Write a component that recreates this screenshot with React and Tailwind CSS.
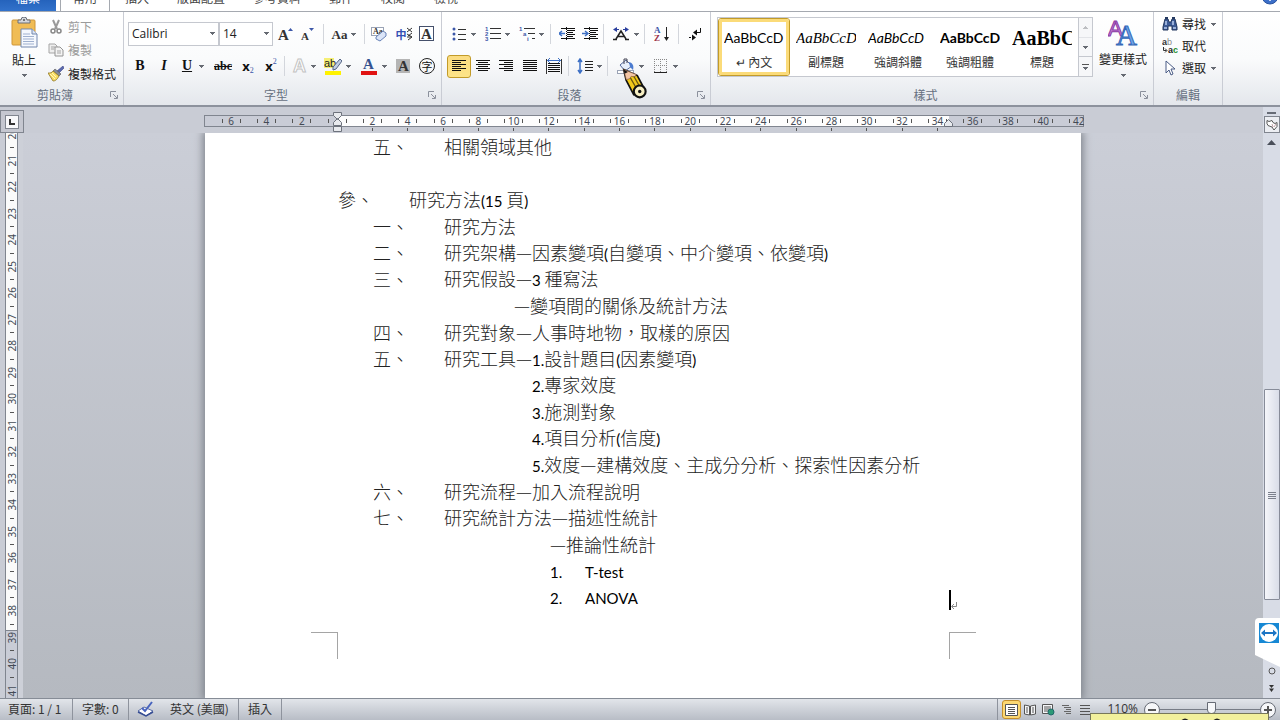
import React, { useState } from 'react';
import clsx from 'clsx';

const tabs = [
  { name: '插入', width: 'w-[54px]' },
  { name: '版面配置', width: 'w-[74px]' },
  { name: '參考資料', width: 'w-[78px]' },
  { name: '郵件', width: 'w-[50px]' },
  { name: '校閱', width: 'w-[54px]' },
  { name: '檢視', width: 'w-[52px]' },
];

const styles = [
  { name: '↵ 內文', sample: 'AaBbCcD', look: 'text-[14px]' },
  { name: '副標題', sample: 'AaBbCcD', look: 'text-[15px] italic font-["Liberation_Serif",serif]' },
  { name: '強調斜體', sample: 'AaBbCcD', look: 'text-[14px] italic' },
  { name: '強調粗體', sample: 'AaBbCcD', look: 'text-[14px] font-bold' },
  { name: '標題', sample: 'AaBbC', look: 'text-[20px] font-bold font-["Liberation_Serif",serif]' },
];

const lines = [
  { indent: 'pl-[35px]', label: '五、', text: '相關領域其他' },
  { indent: '', text: '' },
  { indent: '', label: '參、', text: '研究方法(15 頁)' },
  { indent: 'pl-[35px]', label: '一、', text: '研究方法' },
  { indent: 'pl-[35px]', label: '二、', text: '研究架構—因素變項(自變項、中介變項、依變項)' },
  { indent: 'pl-[35px]', label: '三、', text: '研究假設—3 種寫法' },
  { indent: 'pl-[176px]', text: '—變項間的關係及統計方法' },
  { indent: 'pl-[35px]', label: '四、', text: '研究對象—人事時地物，取樣的原因' },
  { indent: 'pl-[35px]', label: '五、', text: '研究工具—1.設計題目(因素變項)' },
  { indent: 'pl-[194px]', text: '2.專家效度' },
  { indent: 'pl-[194px]', text: '3.施測對象' },
  { indent: 'pl-[194px]', text: '4.項目分析(信度)' },
  { indent: 'pl-[194px]', text: '5.效度—建構效度、主成分分析、探索性因素分析' },
  { indent: 'pl-[35px]', label: '六、', text: '研究流程—加入流程說明' },
  { indent: 'pl-[35px]', label: '七、', text: '研究統計方法—描述性統計' },
  { indent: 'pl-[212px]', text: '—推論性統計' },
  { indent: 'pl-[212px]', label: '1.', narrow: true, text: 'T-test' },
  { indent: 'pl-[212px]', label: '2.', narrow: true, text: 'ANOVA', caret: true },
];

const rulerMarks = Array.from({ length: 25 }, (_, i) => i * 2 - 6);
const sideMarks = Array.from({ length: 22 }, (_, i) => i + 20);

const Arrow = ({ className = '' }) => (
  <svg width="5" height="3" viewBox="0 0 5 3" className={clsx('shrink-0', className)} shapeRendering="crispEdges">
    <path d="M0 0h5v1H4v1H3v1H2V2H1V1H0z" fill="#666a72" />
  </svg>
);

const Separator = ({ className = '' }) => (
  <div className={clsx('w-px h-5 bg-[#d3d6dc] shrink-0', className)} />
);

const Tool = ({ label, width = 'w-6', active, arrow, children }) => (
  <button
    type="button"
    aria-label={label}
    className={clsx(
      'h-[23px] shrink-0 flex items-center justify-center gap-1',
      width,
      active && 'rounded-[3px] border border-[#c29b29] bg-gradient-to-b from-[#fbdc81] to-[#fde488]'
    )}
  >
    {children}
    {arrow && <Arrow />}
  </button>
);

const Glyph = ({ children, w = 16, h = 16 }) => (
  <svg width={w} height={h} viewBox={`0 0 ${w} ${h}`} className="shrink-0">
    {children}
  </svg>
);

// 段落對齊用的橫線
const Bars = ({ rows }) => (
  <svg width="16" height="14" viewBox="0 0 16 14" shapeRendering="crispEdges" fill="#111">
    {rows.map(([x, w], i) => (
      <rect key={i} x={x} y={1 + i * 2} width={w} height="1" />
    ))}
  </svg>
);

const alignLeft = [[1, 14], [1, 9], [1, 14], [1, 9], [1, 14], [1, 9]];
const alignCenter = [[1, 14], [3, 10], [1, 14], [3, 10], [1, 14], [3, 10]];
const alignRight = [[1, 14], [6, 9], [1, 14], [6, 9], [1, 14], [6, 9]];
const alignFull = [[1, 14], [1, 14], [1, 14], [1, 14], [1, 14], [1, 14]];

const Group = ({ title, width, launcher, children }) => (
  <section className={clsx('h-full shrink-0 flex flex-col border-r border-[#c9ccd4]', width)}>
    <div className="flex-1 min-h-0">{children}</div>
    <div className="h-5 flex items-center text-[#66707f]">
      <h2 className="flex-1 text-center leading-none">{title}</h2>
      {launcher && (
        <button type="button" aria-label={title + '選項'} className="block w-[13px]">
          <svg width="8" height="8" viewBox="0 0 8 8" fill="none" stroke="#8b909c">
            <path d="M0.500 6V0.500H6M3 3l4 4M7.500 4v3.500H4" />
          </svg>
        </button>
      )}
    </div>
  </section>
);

const Combo = ({ label, value, width }) => (
  <div className={clsx('relative h-6 shrink-0', width)}>
    <select
      aria-label={label}
      defaultValue={value}
      className="appearance-none w-full h-full bg-white border border-[#c5c8cf] pl-[3px] text-[12px] leading-none text-[#222] font-['Open_Sans',sans-serif]"
    >
      <option>{value}</option>
    </select>
    <Arrow className="absolute right-[4px] top-[10px]" />
  </div>
);

const ClipboardGroup = () => (
  <Group title="剪貼簿" width="w-[124px]" launcher>
    <div className="flex">
      <button type="button" className="w-12 pt-[5px] flex flex-col items-center text-[#222]">
        <Glyph w={28} h={31}>
          <rect x="2" y="3" width="23" height="25" rx="1" fill="#f0bc55" stroke="#cf9638" />
          <path d="M8 6V3h3a3 3 0 0 1 6 0h3v3z" fill="#d4d7dc" stroke="#6a6f78" />
          <circle cx="14" cy="3" r="1" fill="#555" />
          <path d="M11 12h11l5 5v13H11z" fill="#f5f8fd" stroke="#7287ad" />
          <path d="M22 12v5h5" fill="#dde6f4" stroke="#7287ad" />
          <path d="M13 17h7M13 19.500h11M13 22h11M13 24.500h11M13 27h11" stroke="#9fb0cf" />
        </Glyph>
        <span className="leading-4 mt-[4px]">貼上</span>
        <Arrow className="mt-[6px]" />
      </button>
      <div className="flex flex-col pt-[3px]">
        <button type="button" className="h-[23px] flex items-center gap-1 text-[#9b9b9b]">
          <Glyph>
            <path d="M5 1l4 9M11 1L7 10" stroke="#9a9a9a" strokeWidth="2" />
            <circle cx="5" cy="12" r="2" fill="none" stroke="#888" strokeWidth="1.500" />
            <circle cx="11" cy="12" r="2" fill="none" stroke="#888" strokeWidth="1.500" />
          </Glyph>
          剪下
        </button>
        <button type="button" className="h-6 flex items-center gap-1 text-[#9b9b9b]">
          <Glyph>
            <path d="M1 2h6l2 2v7H1z" fill="#eee" stroke="#a5a5a5" />
            <path d="M7 5h5l3 3v6H7z" fill="#f4f4f4" stroke="#949494" />
            <path d="M3 5h4M3 7h3M9 9h4M9 11h4" stroke="#a5a5a5" />
          </Glyph>
          複製
        </button>
        <button type="button" className="h-[23px] flex items-center gap-1 text-[#222]">
          <Glyph>
            <path d="M15 0l1 2-5 5-2-2z" fill="#5a69b0" stroke="#3a4583" strokeWidth="0.600" />
            <path d="M7 3l6 5-2 2-6-5z" fill="#848a98" stroke="#555" strokeWidth="0.600" />
            <path d="M5 5l6 5c-2 4-4 5-6 5L0 7c2 0 4 0 5-2z" fill="#f7dc62" stroke="#8d7525" strokeWidth="0.800" />
            <path d="M2 8l5 5M4 7l4 4" stroke="#fff6ba" />
          </Glyph>
          複製格式
        </button>
      </div>
    </div>
  </Group>
);

const FontGroup = () => (
  <Group title="字型" width="w-[318px]" launcher>
    <div className="flex items-center h-[32px] mt-[6px] pl-[4px]">
      <Combo label="字型" value="Calibri" width="w-[91px]" />
      <Combo label="字型大小" value="14" width="w-[54px]" />
      <Tool label="放大字型">
        <Glyph>
          <text x="1" y="14" fontSize="15" fontWeight="bold" fontFamily="Liberation Serif" fill="#333">A</text>
          <path d="M11 5l2.500-3L16 5z" fill="#3c57a8" />
        </Glyph>
      </Tool>
      <Tool label="縮小字型" width="w-5">
        <Glyph>
          <text x="2" y="14" fontSize="11" fontWeight="bold" fontFamily="Liberation Serif" fill="#333">A</text>
          <path d="M10 2h5l-2.500 3z" fill="#3c57a8" />
        </Glyph>
      </Tool>
      <Separator className="ml-[6px]" />
      <Tool label="變更大小寫" width="w-[40px]" arrow>
        <span className="text-[13px] font-bold text-[#333] font-['Liberation_Serif',serif]">Aa</span>
      </Tool>
      <Separator />
      <Tool label="清除格式設定" width="w-[28px]">
        <Glyph>
          <rect x="0.500" y="1.500" width="12" height="8" fill="#fff" stroke="#9aa3b5" />
          <text x="2" y="8" fontSize="8" fontWeight="bold" fontFamily="Liberation Serif" fill="#333">Aa</text>
          <path d="M5 11l7-6 3 2v3l-6 5-4-2z" fill="#dbe5f8" stroke="#6781b6" />
        </Glyph>
      </Tool>
      <Tool label="注音標示" width="w-[22px]">
        <span className="flex items-center font-bold leading-none">
          <span className="text-[11px] text-[#3450b4]">中</span>
          <svg width="6" height="14" viewBox="0 0 6 14" stroke="#333">
            <path d="M0 1l5 4M5 1L0 5M0 7l5 3M5 6L1 9M0 10h5M1 13l4-3" />
          </svg>
        </span>
      </Tool>
      <Tool label="字元框線">
        <Glyph>
          <rect x="0.500" y="0.500" width="14" height="14" fill="#fff" stroke="#45506b" />
          <text x="2" y="13" fontSize="15" fontWeight="bold" fontFamily="Liberation Serif" fill="#333">A</text>
        </Glyph>
      </Tool>
    </div>
    <div className="flex items-center h-[32px] pl-[4px] font-['Liberation_Serif',serif] text-[#111]">
      <Tool label="粗體"><b className="text-[14px]">B</b></Tool>
      <Tool label="斜體"><b className="text-[14px] italic">I</b></Tool>
      <Tool label="底線" width="w-[34px]" arrow><b className="text-[14px] underline mr-[3px]">U</b></Tool>
      <Tool label="刪除線" width="w-[26px]"><b className="text-[12px] line-through">abc</b></Tool>
      <Tool label="下標">
        <b className="text-[13px] font-['Noto_Sans',sans-serif]">x</b>
        <span className="text-[8px] text-[#3c57a8] self-end mb-[3px] -ml-1">2</span>
      </Tool>
      <Tool label="上標" width="w-[22px]">
        <b className="text-[13px] font-['Noto_Sans',sans-serif]">x</b>
        <span className="text-[8px] text-[#3c57a8] self-start mt-[3px] -ml-1">2</span>
      </Tool>
      <Separator className="mx-[2px]" />
      <Tool label="文字效果" width="w-[32px]" arrow>
        <Glyph>
          <text x="2" y="14" fontSize="18" fontWeight="bold" fontFamily="Liberation Sans" fill="#fff" stroke="#c3c3c3">A</text>
        </Glyph>
      </Tool>
      <Tool label="醒目提示" width="w-[36px]" arrow>
        <Glyph w={18} h={18}>
          <rect x="0" y="1" width="10" height="10" fill="#f6ef75" />
          <text x="0" y="10" fontSize="11" fontFamily="Liberation Sans" fill="#222">ab</text>
          <path d="M16 2l2 2-6 8-3 1v-3z" fill="#c2cee4" stroke="#566685" />
          <rect x="1" y="14" width="16" height="4" fill="#fff200" />
        </Glyph>
      </Tool>
      <Tool label="字型色彩" width="w-[36px]" arrow>
        <Glyph w={18} h={18}>
          <text x="3" y="12" fontSize="15" fontWeight="bold" fontFamily="Liberation Serif" fill="#34528f">A</text>
          <rect x="1" y="14" width="16" height="4" fill="#e01212" />
        </Glyph>
      </Tool>
      <Tool label="字元網底">
        <Glyph>
          <rect x="1" y="1" width="14" height="14" fill="#b5b5b5" />
          <text x="3" y="13" fontSize="15" fontWeight="bold" fontFamily="Liberation Serif" fill="#333">A</text>
        </Glyph>
      </Tool>
      <Tool label="圍繞字元">
        <span className="size-4 rounded-full border border-[#222] flex items-center justify-center text-[11px] leading-none font-['Noto_Sans_CJK_TC',sans-serif]">字</span>
      </Tool>
    </div>
  </Group>
);

const DigitList = ({ digits, step }) => (
  <Glyph>
    {digits.map((d, i) => (
      <g key={d}>
        <text x={i * step} y={5 + i * 5} fontSize="6" fontWeight="bold" fontFamily="Liberation Sans" fill="#3c57a8">{d}</text>
        <rect x={5 + i * step} y={2 + i * 5} width={11 - i * step} height="1" fill="#333" />
      </g>
    ))}
  </Glyph>
);

const IndentIcon = ({ flip }) => (
  <Glyph>
    <path d="M2 2.500h14M8 4.500h8M8 6.500h6M8 8.500h8M8 10.500h6M2 12.500h14" stroke="#111" shapeRendering="crispEdges" />
    <path d="M7.500 1v14" stroke="#111" strokeDasharray="1 1" />
    <path d={flip ? 'M0 7.500h6M3 5l3 2.500-3 2.500' : 'M6 7.500H0M3 5L0 7.500 3 10'} stroke="#3c6fc4" strokeWidth="1.500" fill="none" />
  </Glyph>
);

const Pencil = () => (
  <svg width="27" height="34" viewBox="0 0 32 40" className="absolute left-[180px] top-[48px] pointer-events-none">
    <path d="M2 4l3 13 9 17 13-6-9-17z" fill="#f2c91b" stroke="#111" strokeWidth="2" strokeLinejoin="round" />
    <path d="M2 4l3 12 4-1 2-3 4 1 2-3z" fill="#f3c5a5" stroke="#7a5038" strokeWidth="0.800" />
    <path d="M2 4l1 5 4-2z" fill="#111" />
    <path d="M10 14l8 14M14 12l8 14" stroke="#6a5610" strokeWidth="1.500" />
    <circle cx="21" cy="30" r="7" fill="#f7efc3" stroke="#111" strokeWidth="2.500" />
    <circle cx="21" cy="30" r="2" fill="#111" />
  </svg>
);

const ParagraphGroup = () => (
  <Group title="段落" width="w-[269px]" launcher>
    <div className="relative">
      <div className="flex items-center h-[32px] mt-[6px] pl-[4px]">
        <Tool label="項目符號" width="w-[34px]" arrow>
          <Glyph>
            <g fill="#3c57a8"><circle cx="3" cy="3" r="1.500" /><circle cx="3" cy="8" r="1.500" /><circle cx="3" cy="13" r="1.500" /></g>
            <path d="M7 3.500h8M7 8.500h8M7 13.500h8" stroke="#333" />
          </Glyph>
        </Tool>
        <Tool label="編號" width="w-[34px]" arrow><DigitList digits={['1', '2', '3']} step={0} /></Tool>
        <Tool label="多層次清單" width="w-[34px]" arrow><DigitList digits={['1', 'a', 'i']} step={4} /></Tool>
        <Separator className="ml-[2px] mr-[4px]" />
        <Tool label="減少縮排"><IndentIcon /></Tool>
        <Tool label="增加縮排" width="w-[22px]"><IndentIcon flip /></Tool>
        <Separator className="mx-[2px]" />
        <Tool label="亞洲方式配置" width="w-[38px]" arrow>
          <Glyph w={18}>
            <path d="M1 13.500h4M13 13.500h4M4 13l5-8 5 8M6 10.500h6" stroke="#222" strokeWidth="1.500" fill="none" />
            <path d="M5 1L1 3.500 5 6V4h2V3H5zM13 1l4 2.500L13 6V4h-2V3h2z" fill="#2b3f9e" />
          </Glyph>
        </Tool>
        <Separator />
        <Tool label="排序" width="w-[33px]">
          <Glyph>
            <text x="0" y="7" fontSize="9" fontWeight="bold" fontFamily="Liberation Serif" fill="#3c57a8">A</text>
            <text x="0" y="15" fontSize="9" fontWeight="bold" fontFamily="Liberation Serif" fill="#9c3348">Z</text>
            <path d="M12.500 1v12" stroke="#222" />
            <path d="M10 11h5l-2.500 4z" fill="#222" />
          </Glyph>
        </Tool>
        <Separator />
        <Tool label="顯示/隱藏編輯標記" width="w-[32px]">
          <Glyph>
            <path d="M13.500 2v4.500H9" stroke="#111" fill="none" />
            <path d="M6 6.500l4-3v6zM9 11.500l-4-3v6z" fill="#111" />
            <path d="M2 11.500h4" stroke="#111" strokeDasharray="2 1" />
          </Glyph>
        </Tool>
      </div>
      <div className="flex items-center h-[32px] pl-[5px]">
        <Tool label="靠左對齊" active><Bars rows={alignLeft} /></Tool>
        <Tool label="置中" width="w-[23px]"><Bars rows={alignCenter} /></Tool>
        <Tool label="靠右對齊"><Bars rows={alignRight} /></Tool>
        <Tool label="左右對齊"><Bars rows={alignFull} /></Tool>
        <Tool label="分散對齊">
          <Glyph>
            <path d="M2 5.500h12M2 7.500h12M2 9.500h12M2 11.500h12M2 13.500h12" stroke="#111" shapeRendering="crispEdges" />
            <path d="M0.500 1v15M15.500 1v15" stroke="#333" />
            <path d="M1 2.500h14M4 0L1.500 2.500 4 5M12 0l2.500 2.500L12 5" stroke="#3c6fc4" fill="none" />
          </Glyph>
        </Tool>
        <Separator className="mx-[2px]" />
        <Tool label="行距" width="w-[36px]" arrow>
          <Glyph>
            <path d="M3 1v14M1 4l2-3 2 3M1 12l2 3 2-3" stroke="#3c6fc4" strokeWidth="1.500" fill="none" />
            <path d="M8 3.500h8M8 6.500h8M8 9.500h8M8 12.500h8" stroke="#222" />
          </Glyph>
        </Tool>
        <Separator className="mr-[4px]" />
        <Tool label="網底" width="w-[36px]" arrow>
          <Glyph w={18}>
            <path d="M3 7l6-5 6 6-7 5z" fill="#e6eefb" stroke="#55699c" />
            <path d="M12 4c4 1 5 4 4 8l-3-3z" fill="#4b7bd0" />
            <path d="M7 6V1h3v4" fill="none" stroke="#445" />
            <rect x="0.500" y="12.500" width="16" height="3" fill="#fff" stroke="#9aa3b5" />
          </Glyph>
        </Tool>
        <Tool label="框線" width="w-[34px]" arrow>
          <Glyph>
            <path d="M1 1.500h13M1 7.500h13M1.500 1v13M7.500 1v13M13.500 1v13" stroke="#888" strokeDasharray="1 1" />
            <path d="M1 14.500h13" stroke="#222" />
          </Glyph>
        </Tool>
      </div>
      <Pencil />
    </div>
  </Group>
);

const StylesGroup = () => {
  const [current, setCurrent] = useState(0);
  return (
    <Group title="樣式" width="w-[443px]" launcher>
      <div className="flex pl-[6px] pt-[5px]">
        <div className="flex h-[60px] border border-[#c5c8cf] bg-white">
          {styles.map((s, i) => (
            <button
              key={s.name}
              type="button"
              onClick={() => setCurrent(i)}
              className={clsx(
                'w-[72px] flex flex-col items-center pt-[5px] overflow-hidden text-[#333]',
                i === current
                  ? 'border border-[#c29b29] outline-3 -outline-offset-4 outline-[#fbdb79] rounded-[3px]'
                  : 'border border-transparent'
              )}
            >
              <span className="w-[60px] h-7 overflow-hidden flex items-center whitespace-nowrap text-black font-['Lato',sans-serif]">
                <span className={s.look}>{s.sample}</span>
              </span>
              <span className="leading-4 mt-[2px]">{s.name}</span>
            </button>
          ))}
          <div className="w-[14px] flex flex-col border-l border-[#c5c8cf] divide-y divide-[#c5c8cf] bg-[#f6f7f9]">
            <button type="button" aria-label="上一列" className="flex-1 flex items-center justify-center opacity-40">
              <Arrow className="rotate-180" />
            </button>
            <button type="button" aria-label="下一列" className="flex-1 flex items-center justify-center"><Arrow /></button>
            <button type="button" aria-label="其他" className="flex-1 flex flex-col items-center justify-center gap-[2px]">
              <span className="w-[7px] h-px bg-[#555]" />
              <Arrow />
            </button>
          </div>
        </div>
        <button type="button" className="flex-1 flex flex-col items-center text-[#222]">
          <Glyph w={30} h={30}>
            <text x="0" y="19" fontSize="22" fontFamily="Liberation Sans" fill="#c583d6" stroke="#8a3aa4">A</text>
            <text x="8" y="28" fontSize="29" fontFamily="Liberation Serif" fill="#6ea6ea" stroke="#3568b8">A</text>
          </Glyph>
          <span className="leading-4 mt-[4px]">變更樣式</span>
          <Arrow className="mt-[7px]" />
        </button>
      </div>
    </Group>
  );
};

const EditGroup = () => (
  <Group title="編輯" width="w-[69px]">
    <div className="flex flex-col pl-2 pt-px text-[#222]">
      <button type="button" className="h-[22px] flex items-center gap-1">
        <Glyph>
          <path d="M3 3h3l1 3h2l1-3h3l2 8v3h-5v-4H6v4H1v-3z" fill="#3d5b95" stroke="#24385f" />
          <path d="M3 1h3v2H3zM10 1h3v2h-3z" fill="#24385f" />
          <path d="M2 12h3M11 12h3M4 5v4M11 5v4" stroke="#b9cdf0" strokeWidth="1.500" />
        </Glyph>
        尋找
        <Arrow className="ml-px" />
      </button>
      <button type="button" className="h-[22px] flex items-center gap-1">
        <Glyph>
          <text x="0" y="7" fontSize="9" fontWeight="bold" fontFamily="Liberation Sans" fill="#333">a</text>
          <text x="5" y="7" fontSize="9" fontFamily="Liberation Sans" fill="#8a8a8a">b</text>
          <text x="6" y="15" fontSize="9" fontWeight="bold" fontFamily="Liberation Sans" fill="#222">a</text>
          <text x="11" y="15" fontSize="9" fontWeight="bold" fontFamily="Liberation Sans" fill="#1f8f2e">c</text>
          <path d="M1.500 9v3.500h3M3 10.500l2 2-2 2" stroke="#333" fill="none" />
        </Glyph>
        取代
      </button>
      <button type="button" className="h-[22px] flex items-center gap-1">
        <Glyph>
          <path d="M4 1v12l3-3 2 5 2-1-2-5h4z" fill="#fff" stroke="#4a5c86" />
        </Glyph>
        選取
        <Arrow className="ml-px" />
      </button>
    </div>
  </Group>
);

const Ruler = () => (
  <div className="relative w-[880px] h-[18px] mx-auto text-[10px] text-[#444a55] font-['Noto_Sans',sans-serif]">
    <div className="h-3 border border-[#80858f] bg-[linear-gradient(to_right,#c9ccd6_132px,#fdfdfd_132px,#fdfdfd_744px,#c9ccd6_744px)]" />
    <div className="absolute inset-0 overflow-hidden">
      <div className="flex ml-[10px] -mr-[13px]">
        {rulerMarks.map((n) => (
          <div key={n} className="flex-1 flex flex-col items-center">
            <div className="w-[19px] h-3 flex items-center justify-between leading-none">
              <span className="w-px h-1 bg-[#555]" />
              <span>{n === 0 ? '' : Math.abs(n)}</span>
              <span className="w-px h-1 bg-[#555]" />
            </div>
            {n > 0 && n < 36 && <span className="w-px h-[3px] mt-px bg-[#555]" />}
          </div>
        ))}
      </div>
    </div>
    <svg width="10" height="21" viewBox="0 0 10 21" className="absolute left-[129px] -top-[3px]" fill="#e8eaee" stroke="#6d727c">
      <path d="M0.500 0.500h8v3l-4 4-4-4zM0.500 13.500v-3l4-4 4 4v3z" />
      <path d="M0.500 14.500h8v5h-8z" />
    </svg>
    <svg width="10" height="9" viewBox="0 0 10 9" className="absolute left-[740px] top-[3px]" fill="#e8eaee" stroke="#6d727c">
      <path d="M0.500 8.500v-3l4-4 4 4v3z" />
    </svg>
  </div>
);

const SideRuler = () => (
  <div className="w-[13px] ml-[5px] overflow-hidden border-x border-[#80858f] bg-[linear-gradient(to_top,#c9ccd6_67px,#80858f_67px,#80858f_68px,#fafafa_68px)] flex flex-col text-[10px] leading-none text-[#444a55] font-['Noto_Sans',sans-serif]">
    <div className="flex-1 flex flex-col -mt-[12px] -mb-[6px]">
      {sideMarks.map((n) => (
        <div key={n} className="flex-1 min-h-0 flex flex-col items-center">
          <span className="flex-1 flex items-center justify-center [writing-mode:vertical-rl] rotate-180">{n}</span>
          <span className="h-px w-1 bg-[#555]" />
        </div>
      ))}
    </div>
  </div>
);

// 英數字用 Lato，中文用 Noto
const Mixed = ({ text }) =>
  text.split(/([\x20-\x7e]+)/).map((part, i) =>
    i % 2 ? <span key={i} className="font-['Lato',sans-serif] text-[15px] font-normal text-black">{part}</span> : part
  );

const Page = () => (
  <article className="w-[876px] mx-auto bg-white flex flex-col shadow-[0_0_8px_2px_#7d828a] text-[18px] leading-none font-light text-[#222]">
    <div className="flex-1 flex flex-col pl-[133px] pr-[124px]">
      {lines.map((line, i) => (
        <p key={i} className={clsx('flex-1 min-h-0 flex items-center whitespace-pre', line.indent)}>
          {line.label && (
            <span className={line.narrow ? 'w-[35px]' : 'w-[71px]'}><Mixed text={line.label} /></span>
          )}
          <span><Mixed text={line.text} /></span>
          {line.caret && (
            <span className="ml-auto self-end flex items-end">
              <span className="w-[2px] h-5 bg-black" />
              <svg width="6" height="8" viewBox="0 0 6 8" fill="none" stroke="#888">
                <path d="M5.500 0v4.500H1M3 2L0.500 4.500 3 7" />
              </svg>
            </span>
          )}
        </p>
      ))}
    </div>
    <div className="h-[88px] pt-[22px] pl-[106px] pr-[105px] flex justify-between">
      <div className="size-[27px] border-t border-r border-[#a5a5a5]" />
      <div className="size-[27px] border-t border-l border-[#a5a5a5]" />
    </div>
  </article>
);

const ScrollBar = () => (
  <div className="relative w-[17px] bg-[#d8dce6] flex flex-col items-center">
    <span className="w-[9px] h-[2px] mt-[5px] bg-[#666b76]" />
    <button type="button" aria-label="尺規" className="w-4 h-[17px] mt-[2px] border border-[#80858f] bg-[#eceef3] flex items-center justify-center">
      <svg width="12" height="12" viewBox="0 0 12 12" fill="#fff" stroke="#555">
        <path d="M1 1.500l2 1 3-1 1 2 2 1 2-1v4l-3 3.500-2-3-4-1.500-1-2z" />
        <path d="M6 5l1 3M8 8l2-3" stroke="#96606c" strokeWidth="0.600" />
      </svg>
    </button>
    <svg width="9" height="5" viewBox="0 0 9 5" className="mt-[7px]"><path d="M0 5l4.500-5L9 5z" fill="#4a4f5a" /></svg>
    <div className="flex-1 w-full flex flex-col items-center">
      <div className="grow-[244]" />
      <div className="grow-[201] w-4 border border-[#878c99] rounded-[1px] bg-gradient-to-r from-[#f5f6fa] to-[#d9dde8] flex items-center justify-center">
        <svg width="8" height="8" viewBox="0 0 8 8" stroke="#7b808c" shapeRendering="crispEdges">
          <path d="M0 1h8M0 3h8M0 5h8M0 7h8" />
        </svg>
      </div>
      <div className="grow-[67]" />
    </div>
    <svg width="8" height="8" viewBox="0 0 8 8" fill="none" stroke="#555"><circle cx="4" cy="4" r="3" /></svg>
    <svg width="7" height="7" viewBox="0 0 7 7" className="mt-[10px] mb-[6px]" fill="#333"><path d="M1 0h5L3.500 3zM1 3.500h5L3.500 7z" /></svg>
    <svg width="25" height="50" viewBox="0 0 25 50" className="absolute right-0 bottom-[30px]">
      <path d="M25 0H4Q0 0 0 4v33l25 12z" fill="#fff" />
      <rect x="4" y="5" width="20" height="20" fill="#1788d4" />
      <circle cx="14" cy="15" r="9" fill="#fff" />
      <path d="M6 15l4-3.500v2.500h8v-2.500l4 3.500-4 3.500V16h-8v2.500z" fill="#1c75c4" />
    </svg>
  </div>
);

const StatusBar = () => (
  <footer className="relative h-[22px] shrink-0 flex items-center border-t border-[#868c96] bg-gradient-to-b from-[#e2e5ea] to-[#b8bdc6] text-[#333]">
    <span className="w-[73px] h-full pl-2 pb-[2px] flex items-center border-r border-[#8e939d]">頁面: 1 / 1</span>
    <span className="w-[56px] h-full pl-[9px] pb-[2px] flex items-center border-r border-[#8e939d]">字數: 0</span>
    <span className="w-[110px] h-full pl-2 pb-[2px] flex items-center gap-4 border-r border-[#8e939d]">
      <Glyph w={17}>
        <path d="M1 10l6-4 9 4-7 5z" fill="#fff" stroke="#5469a5" />
        <path d="M1 11l8 4 7-4" fill="none" stroke="#384f94" strokeWidth="1.500" />
        <path d="M5 7l3 3 7-9" fill="none" stroke="#4763be" strokeWidth="2" />
      </Glyph>
      英文 (美國)
    </span>
    <span className="w-[43px] h-full pl-[9px] pb-[2px] flex items-center border-r border-[#8e939d]">插入</span>
    <div className="ml-auto h-full pl-1 flex items-center border-l border-[#8e939d]">
      <button type="button" aria-label="整頁模式" className="size-[19px] flex items-center justify-center rounded-[3px] border border-[#c58f2b] bg-[#fcd873]">
        <svg width="13" height="12" viewBox="0 0 13 12" fill="#fff" stroke="#555"><path d="M0.500 0.500h12v11H0.500z" /><path d="M3 3.500h7M3 5.500h7M3 7.500h7M3 9.500h7" /></svg>
      </button>
      <button type="button" aria-label="閱讀版面" className="w-[18px] flex justify-center">
        <svg width="12" height="12" viewBox="0 0 12 12" fill="#f5f6f8" stroke="#555"><path d="M0.500 1l5 1v9l-5-1zM11.500 1l-5 1v9l5-1z" /><path d="M2 4h2M2 6h2M2 8h2M8 4h2M8 6h2M8 8h2" /></svg>
      </button>
      <button type="button" aria-label="Web 版面" className="w-[18px] flex justify-center">
        <svg width="13" height="12" viewBox="0 0 13 12" fill="#f5f6f8" stroke="#555"><path d="M0.500 0.500h10v9h-10z" /><path d="M2 3h7M2 5h7M2 7h4" /><circle cx="9" cy="8" r="3" fill="#2c9a76" stroke="#22676a" /></svg>
      </button>
      <button type="button" aria-label="大綱模式" className="w-[19px] flex justify-center">
        <svg width="10" height="10" viewBox="0 0 10 10" stroke="#666"><path d="M0 0.500h7M2 2.500h7M4 4.500h5M2 6.500h7M4 8.500h5" /></svg>
      </button>
      <button type="button" aria-label="草稿" className="w-[18px] flex justify-center">
        <svg width="10" height="10" viewBox="0 0 10 10" stroke="#555"><path d="M0 0.500h10M0 3.500h10M0 6.500h10M0 9.500h10" /></svg>
      </button>
      <span className="w-[50px] h-4 text-right text-[12px] leading-[14px] pr-[6px] font-['Open_Sans',sans-serif]">110%</span>
      <button type="button" aria-label="縮小" className="size-4 rounded-full border border-[#666b75] bg-[#f6f7f9] flex items-center justify-center">
        <span className="w-2 h-[2px] bg-[#555]" />
      </button>
      <input
        type="range"
        aria-label="縮放"
        min="0"
        max="100"
        defaultValue="52"
        className="appearance-none w-[100px] h-4 bg-transparent [&::-webkit-slider-runnable-track]:h-px [&::-webkit-slider-runnable-track]:bg-[#777c86] [&::-webkit-slider-thumb]:appearance-none [&::-webkit-slider-thumb]:w-[9px] [&::-webkit-slider-thumb]:h-3 [&::-webkit-slider-thumb]:-mt-[7px] [&::-webkit-slider-thumb]:border [&::-webkit-slider-thumb]:border-[#666b75] [&::-webkit-slider-thumb]:bg-[#f6f7f9] [&::-webkit-slider-thumb]:rounded-b-[4px]"
      />
      <button type="button" aria-label="放大" className="size-4 mr-1 rounded-full border border-[#666b75] bg-[#f6f7f9] flex items-center justify-center">
        <svg width="8" height="8" viewBox="0 0 8 8" stroke="#555" strokeWidth="2"><path d="M4 0v8M0 4h8" /></svg>
      </button>
    </div>
    <div className="absolute right-[11px] bottom-0 w-[179px] h-[7px] border-t border-x border-[#77775a] bg-[#f2f09c] overflow-hidden">
      <svg width="60" height="6" viewBox="0 0 60 6" className="ml-[79px]" stroke="#222" strokeWidth="2" fill="none">
        <path d="M12 7q3-3 6 0M44 7q3-3 6 0" />
      </svg>
    </div>
  </footer>
);

const App = () => (
  <div className="h-screen flex flex-col overflow-hidden text-[12px] leading-none bg-[#c9ccd5] font-['Noto_Sans_CJK_TC',sans-serif]">
    <nav className="relative h-3 shrink-0 flex items-end overflow-hidden bg-white text-[#444] border-b border-[#a5a9b0]">
      <button type="button" className="w-14 h-4 mr-1 flex items-end justify-center pb-[7px] bg-gradient-to-b from-[#1f5cb5] to-[#3272cb] text-white">檔案</button>
      <button type="button" className="w-[50px] h-4 flex items-end justify-center pb-[7px] border-x border-[#a5a9b0] bg-white">常用</button>
      {tabs.map((tab) => (
        <button key={tab.name} type="button" className={clsx('h-4 flex items-end justify-center pb-[7px]', tab.width)}>{tab.name}</button>
      ))}
      <svg width="34" height="12" viewBox="0 0 34 12" className="ml-auto">
        <path d="M3 0h3M9 0h3" stroke="#555" strokeWidth="2" />
        <circle cx="24" cy="-3" r="8" fill="#3c6fc9" stroke="#2b559f" />
        <circle cx="24" cy="1" r="1" fill="#fff" />
      </svg>
    </nav>
    <header className="h-[95px] shrink-0 flex bg-gradient-to-b from-white via-[#fafbfc] to-[#e4e7ec] border-b-2 border-[#8d929d]">
      <ClipboardGroup />
      <FontGroup />
      <ParagraphGroup />
      <StylesGroup />
      <EditGroup />
    </header>
    <main className="flex-1 min-h-0 flex">
      <div className="flex-1 min-w-0 flex flex-col">
        <div className="h-[26px] shrink-0 flex">
          <div className="w-6 h-[23px] mt-[3px] border border-[#80858f] bg-[#c5c7d0] flex items-center justify-center">
            <span className="size-[14px] bg-[#f8f8fa] border border-[#80858f] flex items-center justify-center">
              <span className="size-[6px] border-l-2 border-b-2 border-[#333]" />
            </span>
          </div>
          <div className="flex-1 min-w-0 pt-[8px]"><Ruler /></div>
        </div>
        <div className="flex-1 min-h-0 flex">
          <SideRuler />
          <div className="w-[5px] bg-[#cdd0d8]" />
          <div className="flex-1 min-w-0 flex overflow-hidden bg-gradient-to-b from-[#cbced7] to-[#b5b9c0]">
            <Page />
          </div>
        </div>
      </div>
      <ScrollBar />
    </main>
    <StatusBar />
  </div>
);

export default App;
